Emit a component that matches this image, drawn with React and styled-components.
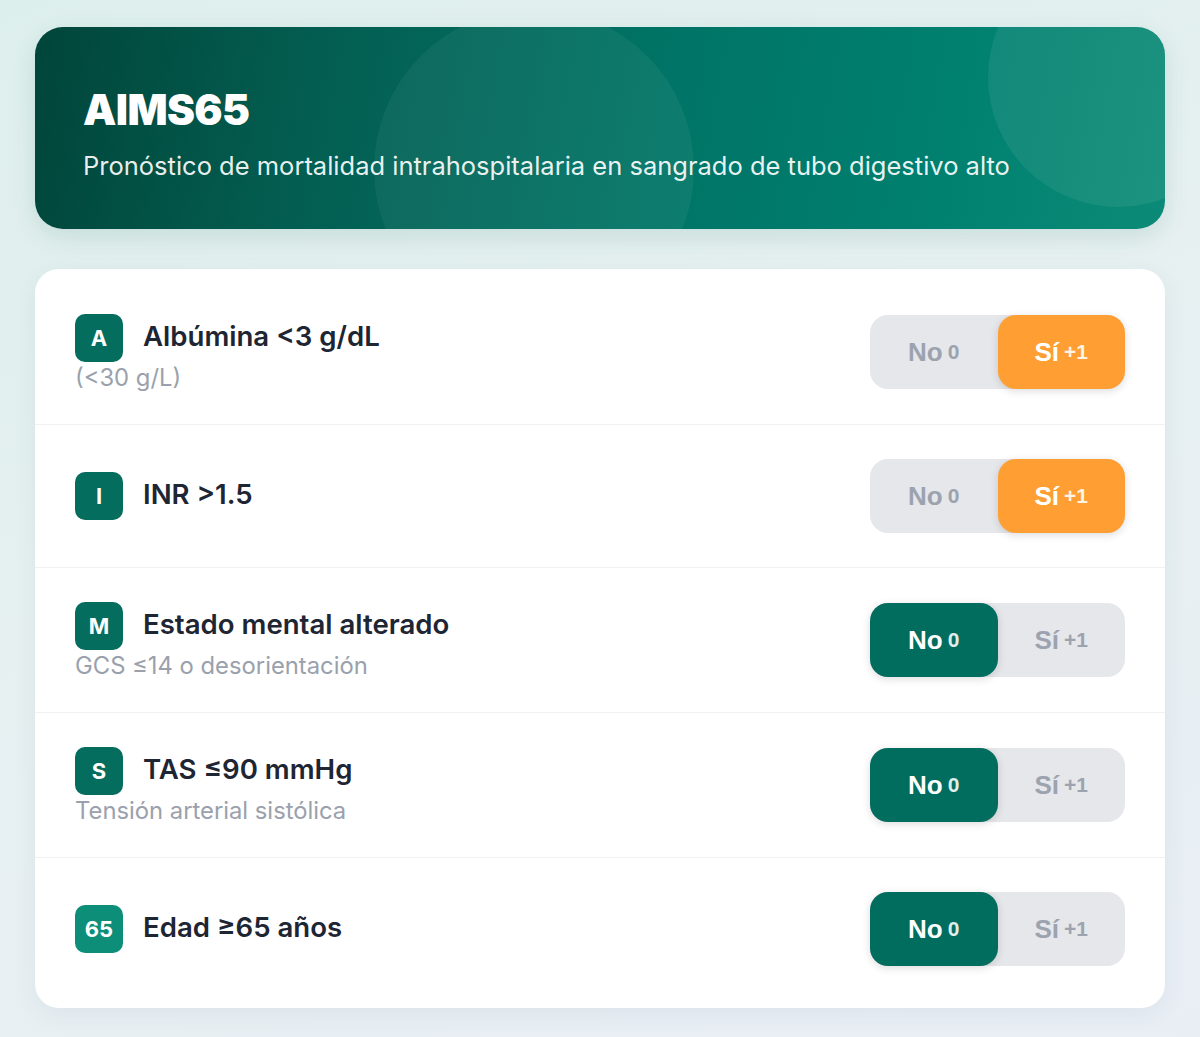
import React, { useState } from "react"
import styled, { createGlobalStyle } from "styled-components"

const GlobalStyle = createGlobalStyle`
  * { box-sizing: border-box; }
  html, body {
    margin: 0;
    padding: 0;
  }
  body {
    min-height: 1037px;
    background: linear-gradient(160deg, #ddefec 0%, #e6f0f1 45%, #e9eef5 100%);
    font-family: Inter, "Noto Sans", sans-serif;
    -webkit-font-smoothing: antialiased;
  }
`

const Page = styled.div`
  width: 1130px;
  margin: 0 auto;
  padding: 27px 0 29px;
  display: flex;
  flex-direction: column;
  gap: 40px;
`

const Hero = styled.header`
  position: relative;
  overflow: hidden;
  height: 202px;
  border-radius: 28px;
  padding: 59px 48px 0;
  color: #fff;
  background: linear-gradient(100deg, #01453a 0%, #035e51 25%, #007466 55%, #00806f 80%, #0b8b77 100%);
  box-shadow: 0 8px 24px rgba(0, 90, 75, 0.12);
`

const Bubble = styled.span`
  position: absolute;
  border-radius: 50%;
  background: rgba(255, 255, 255, ${p => p.$alpha});
  width: ${p => p.$size}px;
  height: ${p => p.$size}px;
  top: ${p => p.$top}px;
  left: ${p => p.$left}px;
`

const Title = styled.h1`
  position: relative;
  margin: 0;
  font-size: 42px;
  line-height: 48px;
  font-weight: 900;
  letter-spacing: -0.6px;
`

const Subtitle = styled.p`
  position: relative;
  margin: 16px 0 0;
  font-size: 25.5px;
  line-height: 32px;
  font-weight: 400;
  color: rgba(255, 255, 255, 0.92);
`

const Card = styled.section`
  background: #fff;
  border-radius: 24px;
  padding: 11px 0 8px;
  box-shadow: 0 6px 24px rgba(30, 60, 80, 0.06);
`

const Row = styled.div`
  display: flex;
  align-items: center;
  justify-content: space-between;
  padding: 34px 40px;
  border-bottom: 1px solid #eff1f3;

  &:last-child {
    border-bottom: none;
  }
`

const Info = styled.div`
  display: flex;
  flex-direction: column;
`

const Head = styled.div`
  display: flex;
  align-items: center;
  gap: 20px;
`

const Badge = styled.span`
  width: 48px;
  height: 48px;
  border-radius: 10px;
  display: flex;
  align-items: center;
  justify-content: center;
  background: ${p => (p.$light ? "#0c8e79" : "#046d5e")};
  color: #fff;
  font-size: 22px;
  font-weight: 700;
  flex-shrink: 0;
`

const Label = styled.span`
  font-size: 27.6px;
  line-height: 34px;
  font-weight: 600;
  color: #1e2533;
  margin-top: -5px;
`

const Hint = styled.span`
  margin-top: 4px;
  font-size: 23.8px;
  line-height: 24px;
  color: #9aa1ac;
`

const Toggle = styled.div`
  display: flex;
  width: 255px;
  height: 74px;
  border-radius: 18px;
  background: #e5e7eb;
`

const Option = styled.button`
  flex: 1;
  border: none;
  border-radius: 18px;
  cursor: pointer;
  font-family: "Liberation Sans", Arial, sans-serif;
  font-weight: 700;
  font-size: 26px;
  display: flex;
  align-items: center;
  justify-content: center;
  gap: 5px;
  color: ${p => (p.$active ? "#fff" : "#9ca3af")};
  background: ${p => (p.$active ? (p.$kind === "yes" ? "#ff9f33" : "#006d5e") : "transparent")};
  box-shadow: ${p => (p.$active ? "0 2px 8px rgba(0, 0, 0, 0.14)" : "none")};

  small {
    font-size: 21px;
    font-weight: 700;
    opacity: ${p => (p.$active ? 0.88 : 1)};
  }
`

const criteria = [
  { key: "A", label: "Albúmina <3 g/dL", hint: "(<30 g/L)", value: true },
  { key: "I", label: "INR >1.5", value: true },
  { key: "M", label: "Estado mental alterado", hint: "GCS ≤14 o desorientación", value: false },
  { key: "S", label: "TAS ≤90 mmHg", hint: "Tensión arterial sistólica", value: false },
  { key: "65", label: "Edad ≥65 años", value: false, light: true },
]

const App = () => {
  const [answers, setAnswers] = useState(criteria.map(c => c.value))

  const set = (i, v) => setAnswers(a => a.map((x, j) => (j === i ? v : x)))

  return (
    <>
      <GlobalStyle />
      <Page>
        <Hero>
          <Bubble $size={320} $top={-18} $left={339} $alpha={0.05} />
          <Bubble $size={260} $top={-80} $left={953} $alpha={0.07} />
          <Title>AIMS65</Title>
          <Subtitle>Pronóstico de mortalidad intrahospitalaria en sangrado de tubo digestivo alto</Subtitle>
        </Hero>
        <Card>
          {criteria.map((c, i) => (
            <Row key={c.key}>
              <Info>
                <Head>
                  <Badge $light={c.light}>{c.key}</Badge>
                  <Label>{c.label}</Label>
                </Head>
                {c.hint && <Hint>{c.hint}</Hint>}
              </Info>
              <Toggle>
                <Option $active={!answers[i]} $kind="no" onClick={() => set(i, false)}>
                  No <small>0</small>
                </Option>
                <Option $active={answers[i]} $kind="yes" onClick={() => set(i, true)}>
                  Sí <small>+1</small>
                </Option>
              </Toggle>
            </Row>
          ))}
        </Card>
      </Page>
    </>
  )
}

export default App
